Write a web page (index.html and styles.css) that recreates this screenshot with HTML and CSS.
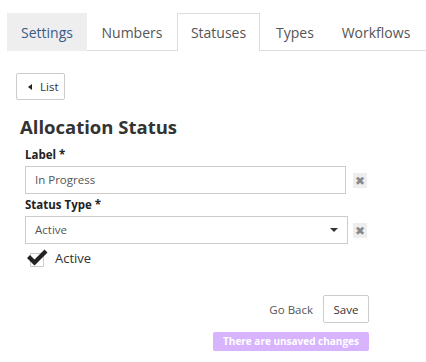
FILE: index.html
```html
<!DOCTYPE html>
<html>
	<head>
		<meta charset="UTF-8">
		<title>Allocation Status</title>
		<link rel="stylesheet" href="styles.css">
	</head>
	<body>
		<div class="page">
			<ul class="tabs">
				<li class="tab t1">Settings</li>
				<li class="tab t2">Numbers</li>
				<li class="tab t3 on">Statuses</li>
				<li class="tab t4">Types</li>
				<li class="tab t5">Workflows</li>
			</ul>
			<div class="content">
				<button class="btn back"><span class="tri"></span>List</button>
				<h1>Allocation Status</h1>
				<div class="field">
					<label>Label *</label>
					<div class="row">
						<div class="input">In Progress</div>
						<span class="clear">✖</span>
					</div>
				</div>
				<div class="field">
					<label>Status Type *</label>
					<div class="row">
						<div class="input select">Active<span class="caret"></span></div>
						<span class="clear">✖</span>
					</div>
				</div>
				<div class="check">
					<svg width="24" height="20" viewBox="0 0 24 20">
						<rect x="4.5" y="5.5" width="13" height="13" fill="#fff" stroke="#ccc"/>
						<path d="M1 10 L4 7 L8.5 11.5 L18.5 1.5 L21.5 4.5 L8.5 17.5 Z" fill="#222"/>
					</svg>
					<span>Active</span>
				</div>
				<div class="actions">
					<span class="link">Go Back</span>
					<button class="btn save">Save</button>
				</div>
				<div class="notice">
					<span class="badge">There are unsaved changes</span>
				</div>
			</div>
		</div>
	</body>
</html>
```
FILE: styles.css
```css
*{
	padding:0;
	margin:0;
	box-sizing:border-box;
}
ul,li{
	list-style:none;
}
body{
	font-family:"Open Sans","Liberation Sans",sans-serif;
	color:#333;
	background:#fff;
}
.page{
	padding:13px 0 0 7px;
}
.tabs{
	display:flex;
	height:38px;
	border-bottom:1px solid #ddd;
}
.tab{
	height:38px;
	line-height:37px;
	font-size:14px;
	color:#555;
	text-align:center;
	border:1px solid transparent;
	border-bottom:none;
}
.t1{
	width:80px;
	background:#eee;
	color:#3a5a8a;
}
.t2{
	width:90px;
}
.t3{
	width:83px;
}
.t4{
	width:70px;
}
.t5{
	width:92px;
}
.tab.on{
	background:#fff;
	border-color:#ddd;
	margin-bottom:-1px;
}
.content{
	padding:22px 0 0 9px;
}
.btn{
	font-family:inherit;
	background:#fff;
	border:1px solid #ccc;
	border-radius:2px;
	color:#333;
	cursor:pointer;
}
.back{
	display:flex;
	align-items:center;
	width:49px;
	height:27px;
	padding-left:11px;
	font-size:11.5px;
}
.tri{
	width:0;
	height:0;
	border-top:3.5px solid transparent;
	border-bottom:3.5px solid transparent;
	border-right:4px solid #222;
	margin-right:8px;
}
h1{
	font-size:18.5px;
	font-weight:700;
	color:#333;
	margin:16px 0 10px 4px;
	line-height:22px;
}
.field{
	padding-left:9px;
}
.field label{
	display:block;
	font-size:11.5px;
	font-weight:700;
	color:#222;
	line-height:14px;
	margin-bottom:4px;
}
.row{
	display:flex;
	align-items:center;
	margin-bottom:4px;
}
.input{
	width:321px;
	height:28px;
	border:1px solid #ccc;
	padding:0 9px;
	line-height:26px;
	font-size:11.5px;
	color:#555;
}
.select{
	width:323px;
	position:relative;
}
.caret{
	position:absolute;
	right:9px;
	top:11px;
	border-left:4px solid transparent;
	border-right:4px solid transparent;
	border-top:4px solid #333;
}
.clear{
	width:14px;
	height:15px;
	margin-left:7px;
	background:#eee;
	color:#888;
	font-size:12px;
	line-height:15px;
	text-align:center;
}
.select + .clear{
	margin-left:5px;
}
.check{
	display:flex;
	align-items:center;
	padding-left:10px;
	margin-top:2px;
}
.check svg{
	margin-right:5px;
}
.check span{
	font-size:13px;
	color:#333;
}
.actions{
	display:flex;
	justify-content:flex-end;
	align-items:center;
	width:353px;
	margin-top:27px;
}
.link{
	font-size:11.5px;
	color:#555;
	margin-right:10px;
}
.save{
	width:46px;
	height:28px;
	font-size:11.5px;
}
.notice{
	display:flex;
	justify-content:flex-end;
	width:353px;
	margin-top:9px;
}
.badge{
	background:#d8b4fe;
	color:#fff;
	font-size:10px;
	font-weight:700;
	border-radius:2px;
	height:19px;
	line-height:19px;
	width:156px;
	text-align:center;
}
```
